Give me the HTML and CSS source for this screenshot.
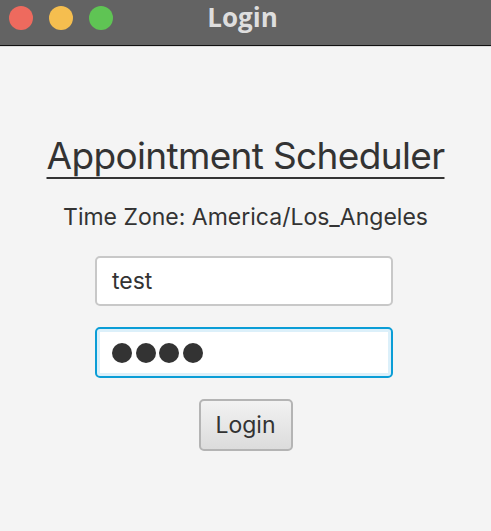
FILE: index.html
```html
<!DOCTYPE html>
<html>
<head>
<meta charset="utf-8">
<link rel="stylesheet" href="styles.css">
</head>
<body>
<div class="window">
  <div class="titlebar">
    <div class="lights">
      <span class="light red"></span>
      <span class="light yellow"></span>
      <span class="light green"></span>
    </div>
    <div class="wintitle">Login</div>
  </div>
  <div class="content">
    <h1 class="heading">Appointment Scheduler</h1>
    <div class="tz">Time Zone: America/Los_Angeles</div>
    <div class="field">test</div>
    <div class="field focused">
      <span class="dot"></span><span class="dot"></span><span class="dot"></span><span class="dot"></span>
    </div>
    <button class="btn">Login</button>
  </div>
</div>
</body>
</html>
```
FILE: styles.css
```css
html, body {
  margin: 0;
  padding: 0;
  background: #f4f4f4;
}
.window {
  width: 491px;
  height: 531px;
  display: flex;
  flex-direction: column;
  font-family: Inter, "Noto Sans", sans-serif;
  color: #333;
}
.titlebar {
  height: 45px;
  background: #636363;
  border-bottom: 1px solid #111;
  position: relative;
  display: flex;
  align-items: center;
  justify-content: center;
}
.lights {
  position: absolute;
  left: 9px;
  top: 6px;
  display: flex;
  gap: 16px;
}
.light {
  width: 24px;
  height: 24px;
  border-radius: 50%;
  display: block;
}
.red { background: #ee6a5e; }
.yellow { background: #f5be4f; }
.green { background: #5fc454; }
.wintitle {
  font-family: "Open Sans", sans-serif;
  font-weight: 700;
  font-size: 26px;
  line-height: 30px;
  color: #dedede;
  margin-top: -12px;
  margin-right: 6px;
}
.content {
  flex: 1;
  border-top: 1px solid #dcdcdc;
  display: flex;
  flex-direction: column;
  align-items: center;
}
.heading {
  margin: 85px 0 0 0;
  font-weight: 400;
  font-size: 37px;
  line-height: 48px;
  text-decoration: underline;
  text-decoration-thickness: 2px;
  text-underline-offset: 8px;
  letter-spacing: -0.65px;
}
.tz {
  margin-top: 23px;
  font-size: 23px;
  line-height: 28px;
}
.field {
  box-sizing: border-box;
  width: 298px;
  height: 50px;
  margin-top: 25px;
  margin-right: 3px;
  background: #fff;
  border: 2px solid #c8c8c8;
  border-radius: 5px;
  padding: 0 15px;
  font-size: 23px;
  display: flex;
  align-items: center;
  gap: 3.5px;
}
.field.focused {
  height: 51px;
  margin-top: 21px;
  border: 2px solid #0a9dd6;
  box-shadow: inset 0 0 0 3px #dcf0fa;
}
.dot {
  width: 20px;
  height: 20px;
  border-radius: 50%;
  background: #333;
  display: block;
}
.btn {
  margin-top: 21px;
  width: 94px;
  height: 52px;
  box-sizing: border-box;
  border: 2px solid #b4b4b4;
  border-radius: 5px;
  background: linear-gradient(#f2f2f2, #dcdcdc);
  font-family: Inter, "Noto Sans", sans-serif;
  font-size: 23px;
  color: #333;
  padding: 0;
}
```
